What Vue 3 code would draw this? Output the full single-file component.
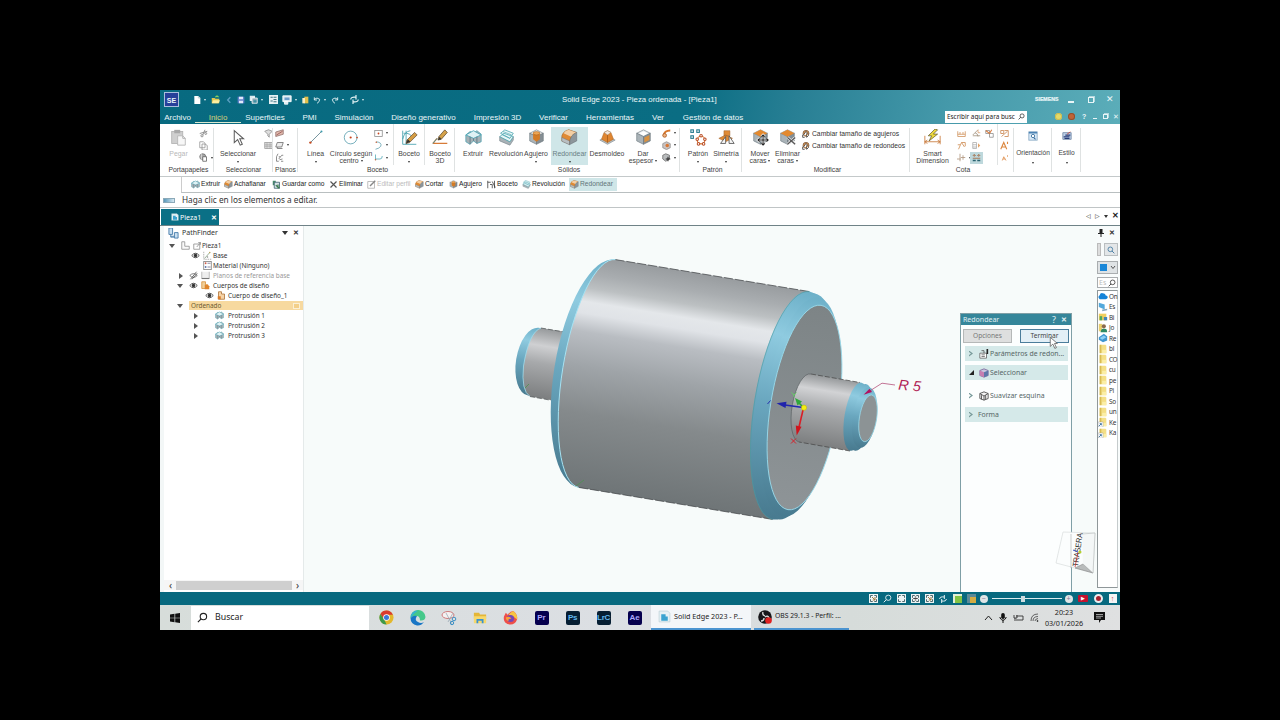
<template>
  <div class="pantalla">
    <!-- Símbolos de iconos -->
    <svg class="defs" width="0" height="0">
      <symbol id="i-cubo" viewBox="0 0 20 20">
        <path d="M10 1 18 5 10 9 2 5Z" fill="#e9edef" stroke="#69757b" stroke-width=".7" />
        <path d="M2 5 10 9V18L2 14Z" fill="#aab3b8" stroke="#69757b" stroke-width=".7" />
        <path d="M18 5 10 9V18L18 14Z" fill="#858e94" stroke="#69757b" stroke-width=".7" />
      </symbol>
      <symbol id="i-extruir" viewBox="0 0 20 20">
        <path d="M1 7 6 3 10 5 14 2 19 6V15L14 17 10 14 6 18 1 15Z" fill="#a5b0b5" stroke="#59a7b5" />
        <path d="M1 7 10 2 19 7 10 11Z" fill="#dff1f4" stroke="#4aa5b5" />
        <path d="M6 9V18M14 9V17M10 11V14" stroke="#5c7a85" />
      </symbol>
      <symbol id="i-revol" viewBox="0 0 20 20">
        <path d="M2 9 14 15 18 9V13L14 19 2 14Z" fill="#a9b2b7" stroke="#758289" stroke-width=".7" />
        <path d="M2 9 7 5 18 9 14 15ZM3 5 8 1 18 5 14 11Z" fill="#e9f7f8" stroke="#47a3ae" stroke-width=".9" />
        <path d="M5 7 14 11M6 3 16 7" stroke="#47a3ae" stroke-width=".7" />
      </symbol>
      <symbol id="i-agujero" viewBox="0 0 20 20">
        <use href="#i-cubo" />
        <path d="M6 5v7l4 3 4-3V5Z" fill="#d47b26" />
        <ellipse cx="10" cy="5" rx="4" ry="2" fill="#eda554" stroke="#a85d18" stroke-width=".6" />
      </symbol>
      <symbol id="i-redondo" viewBox="0 0 20 20">
        <path d="M2 7 9 1 18 4 11 8Z" fill="#f3e6d8" stroke="#8a7462" stroke-width=".7" />
        <path d="M1 8Q3 2 9 1L18 4Q11 6 10 18L1 14Z" fill="#e08a32" stroke="#9c5c20" stroke-width=".6" />
        <path d="M3 5Q5 2 9 1L18 4Q14 5 12 9Z" fill="#f3cfa4" />
        <path d="M1 10 10 14V18.500L1 14.500Z" fill="#b9bfc2" stroke="#6e777c" stroke-width=".6" />
        <path d="M10 18.500Q10 7 18.500 4V14Z" fill="#8d969b" stroke="#646e74" stroke-width=".6" />
      </symbol>
      <symbol id="i-desmoldeo" viewBox="0 0 20 20">
        <path d="M1 13 10 9 19 13 10 18Z" fill="#bcc3c7" stroke="#78838a" stroke-width=".7" />
        <path d="M6 4 10 2 14 4 17 12 10 16 3 12Z" fill="#df8530" stroke="#a66020" stroke-width=".6" />
        <path d="M6 4 10 2 14 4 10 7Z" fill="#f5e8dc" stroke="#8d8174" stroke-width=".5" />
        <path d="M10 7V16" stroke="#aa5d19" />
      </symbol>
      <symbol id="i-espesor" viewBox="0 0 20 20">
        <use href="#i-cubo" />
        <path d="M11 10 17 7V13L11 16Z" fill="#d9913f" />
        <path d="M5 5 10 3 15 5 10 7.500Z" fill="#fff" />
      </symbol>
      <symbol id="i-patron" viewBox="0 0 20 20">
        <g fill="#fff" stroke="#297c91" stroke-width="1.300">
          <rect x="1" y="1" width="3" height="3" /><rect x="8" y="1" width="3" height="3" /><rect x="1" y="8" width="3" height="3" />
        </g>
        <circle cx="13" cy="13" r="4.500" fill="none" stroke="#d87834" stroke-width="1.400" />
        <g fill="#fff" stroke="#b84d26" stroke-width="1.200">
          <circle cx="13" cy="8" r="1.500" /><circle cx="17.500" cy="12" r="1.500" /><circle cx="8.500" cy="12" r="1.500" /><circle cx="16" cy="17.500" r="1.500" /><circle cx="10" cy="17.500" r="1.500" />
        </g>
      </symbol>
      <symbol id="i-simetria" viewBox="0 0 20 20">
        <path d="M7 2h7v6H7ZM1 11 9 7 17 11 9 15Z" fill="#df8b37" stroke="#9d5f27" stroke-width=".6" />
        <path d="M3 17 9 9V17ZM13 8 19 17H13Z" fill="#f7f7f7" stroke="#555" />
      </symbol>
      <symbol id="i-mover" viewBox="0 0 20 20">
        <use href="#i-cubo" /><path d="M10 1 18 5 10 9 2 5Z" fill="#e4892e" />
        <path d="M13 7v12M7 13h12M11 9l2-2 2 2M11 17l2 2 2-2M9 11l-2 2 2 2M17 11l2 2-2 2" fill="none" stroke="#fff" stroke-width="2.800" />
        <path d="M13 7v12M7 13h12M11 9l2-2 2 2M11 17l2 2 2-2M9 11l-2 2 2 2M17 11l2 2-2 2" fill="none" stroke="#222" stroke-width="1.200" />
      </symbol>
      <symbol id="i-elimcara" viewBox="0 0 20 20">
        <use href="#i-cubo" /><path d="M10 1 18 5 10 9 2 5Z" fill="#e4892e" />
        <path d="M10 10 19 18M19 10 10 18" stroke="#f5f5f5" stroke-width="3" /><path d="M10 10 19 18M19 10 10 18" stroke="#555" stroke-width="1.500" />
      </symbol>
      <symbol id="i-pegar" viewBox="0 0 20 20">
        <rect x="2" y="3" width="13" height="14" fill="#cfcfcf" stroke="#b2b2b2" /><rect x="5" y="1" width="7" height="4" fill="#a9a9a9" />
        <path d="M9 8h6l3 3v8H9Z" fill="#f7f7f7" stroke="#b4b4b4" /><path d="M15 8v3h3" fill="none" stroke="#aaa" />
      </symbol>
      <symbol id="i-flecha" viewBox="0 0 20 20"><path d="M5 2V16L9 12.500 12 19 14.500 18 11.500 11.500H16Z" fill="#fff" stroke="#5b5b5b" stroke-width="1.200" /></symbol>
      <symbol id="i-linea" viewBox="0 0 20 20"><path d="M4 16 17 3" stroke="#4b7280" stroke-width=".9" /><circle cx="4" cy="16" r="1.400" fill="#c24a20" /><circle cx="17" cy="3" r="1.200" fill="#3a9aab" /></symbol>
      <symbol id="i-circulo" viewBox="0 0 20 20"><circle cx="9" cy="10" r="7.500" fill="none" stroke="#4f99a9" stroke-width=".9" /><circle cx="9" cy="10" r="1.300" fill="#c8431c" /><circle cx="16.500" cy="10" r="1" fill="#c8431c" /></symbol>
      <symbol id="i-boceto" viewBox="0 0 20 20">
        <path d="M2 2V18H18M3 5Q11 4 14 11M2 12Q4 3 11 2M6 2V18" fill="none" stroke="#45a0ae" />
        <path d="M16 4 19 7 10 16 6 17 7 13Z" fill="#d49c43" stroke="#5a4630" stroke-width=".8" /><path d="M8 12 6 17 11 15Z" fill="#333" />
      </symbol>
      <symbol id="i-boceto3d" viewBox="0 0 20 20">
        <path d="M1 17 6 11M1 17H18" stroke="#d77b38" stroke-width="1.500" /><path d="M1 17 6 11" stroke="#3b9aaa" />
        <path d="M15 1 18 4 11 12 7 13 8 9Z" fill="#d5a24a" stroke="#4c3d29" stroke-width=".8" /><path d="M9 9 7 13 11 12Z" fill="#333" />
      </symbol>
      <symbol id="i-smart" viewBox="0 0 20 20">
        <path d="M1 8V18M19 8V18M1 15H19M1 15l3-2M1 15l3 2M19 15l-3-2M19 15l-3 2" fill="none" stroke="#c97a3b" />
        <path d="M13 0 5 8H9L6 14 16 6H11L16 1Z" fill="#eedb3d" stroke="#574e25" stroke-width=".8" />
      </symbol>
      <symbol id="i-tijera" viewBox="0 0 12 12"><path d="M1 6 11 3M5 8 8 1" stroke="#888" stroke-width="1.200" /><circle cx="4" cy="9" r="1.500" fill="none" stroke="#777" /><circle cx="9" cy="6" r="1.300" fill="none" stroke="#777" /></symbol>
      <symbol id="i-copiar" viewBox="0 0 12 12"><path d="M1 1h5l2 2v6H1ZM4 4h4l3 2v6H4Z" fill="#fff" stroke="#8f8f8f" /></symbol>
      <symbol id="i-pegarb" viewBox="0 0 12 12"><circle cx="5" cy="5" r="4" fill="#aaa" stroke="#666" /><path d="M5 5h5v6H5Z" fill="#fff" stroke="#555" /><path d="M3 1v8" stroke="#eee" /></symbol>
      <symbol id="i-filtro" viewBox="0 0 12 12"><path d="M1 3 6 1l5 2-4 4v4L5 9V7Z" fill="#dedede" stroke="#8a8a8a" /></symbol>
      <symbol id="i-lista" viewBox="0 0 12 12"><rect x="1" y="2" width="10" height="8" fill="#ddd" stroke="#999" /><path d="M1 5h10M1 7h10M4 2v8M8 2v8" stroke="#999" stroke-width=".7" /></symbol>
      <symbol id="i-plano1" viewBox="0 0 12 12"><path d="M1 4 11 1V7L1 10Z" fill="#e1b9ac" stroke="#8f6e69" /><path d="M2 8 10 3" stroke="#8b4949" /></symbol>
      <symbol id="i-plano2" viewBox="0 0 12 12"><path d="M3 2h8L9 8H1ZM3 8v2h7" fill="#ececec" stroke="#666" /></symbol>
      <symbol id="i-plano3" viewBox="0 0 12 12"><path d="M4 1 2 5v6h3M5 8l4-5M6 9l4-1M9 3h2M5 5h2M8 11h3" fill="none" stroke="#777" stroke-width="1.100" /></symbol>
      <symbol id="i-rect" viewBox="0 0 12 12"><rect x="1" y="2" width="10" height="8" fill="none" stroke="#888" /><circle cx="6" cy="6" r="1.200" fill="#c8431c" /></symbol>
      <symbol id="i-arco" viewBox="0 0 12 12"><path d="M3 1Q11 2 9 7 7 10 2 11" fill="none" stroke="#579aaa" /><circle cx="3" cy="1.500" r="1" fill="#c85b31" /></symbol>
      <symbol id="i-curva" viewBox="0 0 12 12"><path d="M2 2V8H8Q11 8 11 4" fill="none" stroke="#4ba4b3" /><circle cx="2" cy="9" r="1" fill="#bb5e3a" /></symbol>
      <symbol id="i-barrido" viewBox="0 0 12 12"><path d="M2 9Q3 2 11 2" fill="none" stroke="#d8772c" stroke-width="2.500" /><circle cx="3.500" cy="8.500" r="2.500" fill="#edb17f" stroke="#a5541c" /></symbol>
      <symbol id="i-bola" viewBox="0 0 12 12"><path d="M6 1 11 3.500V9L6 11.500 1 9V3.500Z" fill="#c9c2c0" stroke="#777" stroke-width=".8" /><circle cx="7" cy="6" r="2.300" fill="#d97734" /></symbol>
      <symbol id="i-hexa" viewBox="0 0 12 12"><path d="M5 1 10 3V8L5 11 1 8V3Z" fill="#b9bcbd" stroke="#666" /><path d="M8 5v6M5 8h6" stroke="#222" stroke-width="1.300" /></symbol>
      <symbol id="i-tam" viewBox="0 0 12 12"><circle cx="6" cy="5" r="4.500" fill="#e29a52" stroke="#674c38" /><path d="M2 8 6 2 10 7M1 7v4h3M7 5v6l3-3" fill="#fff" stroke="#3c3632" stroke-width="1.200" /></symbol>
      <symbol id="i-cota1" viewBox="0 0 12 12"><path d="M1 3v7h10V3M1 7h10M4 4v3M8 4v3" fill="none" stroke="#d29662" stroke-width="1.100" /></symbol>
      <symbol id="i-cota2" viewBox="0 0 12 12"><path d="M2 11 6 2 10 8M1 5h3M6 2h5v5" fill="none" stroke="#d29662" stroke-width="1.200" /></symbol>
      <symbol id="i-cota3" viewBox="0 0 12 12"><path d="M4 1v10M0 8h5M5 6h6M8 3v6" fill="none" stroke="#b79e88" stroke-width="1.200" /></symbol>
      <symbol id="i-cota4" viewBox="0 0 12 12"><path d="M1 8 8 1M1 9h10M4 5q4 1 4 5" fill="none" stroke="#9b8b76" /><path d="M8 1v4h3" fill="none" stroke="#d79a6a" /></symbol>
      <symbol id="i-cota5" viewBox="0 0 12 12"><path d="M1 2h5v8H1ZM1 5h5M1 8h5" fill="none" stroke="#aaa" /><path d="M8 3v6l3-3Z" fill="#e3a368" /></symbol>
      <symbol id="i-cota6" viewBox="0 0 12 12"><path d="M1 7h10M3 5V2M3 2l-2 2M3 2l2 2M9 5V2M9 2 7 4M9 2l2 2" fill="none" stroke="#a5714c" stroke-width="1.200" /><path d="M1 10h4M7 10h4" stroke="#2b6472" stroke-width="2" /></symbol>
      <symbol id="i-cota7" viewBox="0 0 12 12"><path d="M1 2h5v4H1ZM6 6h5v5H6Z" fill="none" stroke="#888" /><path d="M1 2 6 6 9 1" fill="none" stroke="#d67c42" stroke-width="1.400" /></symbol>
      <symbol id="i-cota8" viewBox="0 0 12 12"><path d="M1 2h4v4H1ZM6 2h5v8H6M2 10 10 3" fill="none" stroke="#cf915f" stroke-width="1.200" /></symbol>
      <symbol id="i-cotaA" viewBox="0 0 12 12"><path d="M1 11 5 2 9 11M3 8h5M10 1v3" fill="none" stroke="#dc873f" stroke-width="1.500" /></symbol>
      <symbol id="i-cotaB" viewBox="0 0 12 12"><path d="M3 10 5 5 8 10M4 8h3M10 3v2" fill="none" stroke="#dc873f" /></symbol>
      <symbol id="i-orient" viewBox="0 0 12 12"><rect x="1" y="1" width="10" height="10" fill="#d7e9f7" stroke="#8dabc5" /><rect x="1" y="1" width="10" height="2" fill="#4c83b4" /><circle cx="6" cy="6" r="2" fill="#fff" stroke="#376d9b" /><path d="M7 8 9 10" stroke="#376d9b" stroke-width="1.300" /></symbol>
      <symbol id="i-estilo" viewBox="0 0 12 12"><path d="M1 2h10v8H1Z" fill="#bed2e8" stroke="#7187a5" /><path d="M2 7h7M4 5h6M3 9h6" stroke="#273b77" stroke-width="1.400" /><path d="M6 4 10 1" stroke="#c74334" /></symbol>
      <symbol id="i-guardar" viewBox="0 0 12 12"><path d="M1 1h4v6H1Z" fill="#4a8a6c" /><path d="M3 3h7v8H3Z" fill="#d6e2e6" stroke="#315765" /><path d="M5 7 10 11M8 6v5" stroke="#397a4c" stroke-width="1.500" /></symbol>
      <symbol id="i-x" viewBox="0 0 12 12"><path d="M2 2 10 10M10 2 2 10" stroke="#555" stroke-width="1.600" /></symbol>
      <symbol id="i-editar" viewBox="0 0 12 12"><path d="M1 2h9v9H1Z" fill="none" stroke="#aaa" /><path d="M4 8 11 1" stroke="#888" stroke-width="1.800" /></symbol>
      <symbol id="i-perfil" viewBox="0 0 12 12"><path d="M1 1v10M1 3h4M4 6h3v5M7 2l4 8M10 1v10" fill="none" stroke="#333" /></symbol>
      <symbol id="i-hoja" viewBox="0 0 12 12"><path d="M2 0h6l3 3v9H2Z" fill="#fff" /><path d="M8 0v3h3" fill="none" stroke="#a3b9c0" /></symbol>
      <symbol id="i-abrir" viewBox="0 0 12 12"><path d="M1 4h4l1 1h5v6H1Z" fill="#e3c651" /><path d="M1 11 3 7h9l-2 4Z" fill="#fff0a0" /><path d="M6 3q2-3 4 0" fill="none" stroke="#8fd65c" stroke-width="1.500" /></symbol>
      <symbol id="i-clip" viewBox="0 0 12 12"><path d="M8 2 4 6l4 4" fill="none" stroke="#5a9ec0" stroke-width="2" /></symbol>
      <symbol id="i-disco" viewBox="0 0 12 12"><path d="M1 1h10v10H1Z" fill="#5f80c8" /><path d="M3 1h6v4H3ZM3 7h6v4H3Z" fill="#dfe9fa" /></symbol>
      <symbol id="i-discos" viewBox="0 0 12 12"><path d="M1 1h7v7H1Z" fill="#dcebf0" /><path d="M4 4h7v7H4Z" fill="#8aa7b5" stroke="#fff" /><path d="M6 7h4v3H6Z" fill="#3c91a5" /></symbol>
      <symbol id="i-check" viewBox="0 0 12 12"><rect width="12" height="12" fill="#e6f1f4" /><path d="M2 3h3M2 8h3M6 3h4M6 6h4M6 9h4" stroke="#2a6576" stroke-width="1.200" /></symbol>
      <symbol id="i-monit" viewBox="0 0 12 12"><path d="M1 1h10v7H1ZM3 8h4v3H3Z" fill="#d8e9f2" stroke="#fff" /><path d="M3 3h6v3H3Z" fill="#6b9dcb" /></symbol>
      <symbol id="i-puerta" viewBox="0 0 12 12"><path d="M5 1h6v10H5Z" fill="#e2c04c" /><path d="M2 3h4v8H2Z" fill="#f8eec4" /></symbol>
      <symbol id="i-undo" viewBox="0 0 12 12"><path d="M2 2v4h4M2 5q4-4 8 0 0 4-4 6" fill="none" stroke="currentColor" stroke-width="1.300" /></symbol>
      <symbol id="i-redo" viewBox="0 0 12 12"><path d="M10 2v4H6M10 5Q6 1 2 5q0 4 4 6" fill="none" stroke="currentColor" stroke-width="1.300" /></symbol>
      <symbol id="i-sinc" viewBox="0 0 12 12"><path d="M1 6q0-4 7-3M8 0v6M11 6q0 4-7 3M4 6v6" fill="none" stroke="currentColor" stroke-width="1.500" /></symbol>
      <symbol id="i-lupa" viewBox="0 0 12 12"><circle cx="7" cy="5" r="3.500" fill="none" stroke="currentColor" stroke-width="1.200" /><path d="M4.500 7.500 1 11" stroke="currentColor" stroke-width="1.300" /></symbol>
      <symbol id="i-ojo" viewBox="0 0 12 12"><path d="M1 6q5-6 10 0-5 6-10 0Z" fill="#fff" stroke="#444" stroke-width="1.200" /><circle cx="6" cy="6" r="2.300" fill="#333" /></symbol>
      <symbol id="i-ojono" viewBox="0 0 12 12"><path d="M1 6q5-5 10 0-5 5-10 0Z" fill="none" stroke="#555" /><path d="M2 11 10 1M4 11 11 3" stroke="#444" /></symbol>
      <symbol id="i-ele" viewBox="0 0 12 12"><path d="M1 1h4v6h6v4H1Z" fill="#fafafa" stroke="#888" /></symbol>
      <symbol id="i-pieza" viewBox="0 0 12 12"><path d="M1 4h8v7H1ZM5 8l5-6M7 2h3v3" fill="none" stroke="#888" /></symbol>
      <symbol id="i-base" viewBox="0 0 12 12"><path d="M1 1v10h10" fill="none" stroke="#999" stroke-dasharray="2 1" /><path d="M2 10 9 2" stroke="#7c9a79" /><circle cx="9" cy="2" r="1" fill="#b7a452" /><circle cx="6" cy="8" r="1" fill="#888" /></symbol>
      <symbol id="i-mat" viewBox="0 0 12 12"><rect x="1" y=".5" width="10" height="11" fill="#fff" stroke="#777" /><path d="M6 3h4M6 8h4" stroke="#668" /><circle cx="3.500" cy="3" r="1.200" fill="#d25c48" /><circle cx="3.500" cy="8" r="1.200" fill="#5973aa" /></symbol>
      <symbol id="i-planos" viewBox="0 0 12 12"><path d="M1 1v9h10V1" fill="#eee" stroke="#aaa" /><path d="M1 10h10" stroke="#777" stroke-width="1.500" /></symbol>
      <symbol id="i-cuerpo" viewBox="0 0 12 12"><path d="M1 1h5v4h3v5H1Z" fill="#f1cf99" stroke="#d58b33" /><path d="M5 5h4l2 2v4H5Z" fill="#df842c" /></symbol>
      <symbol id="i-cuerpo1" viewBox="0 0 12 12"><path d="M2 1h4v3h4v7H2Z" fill="#f5d4a9" stroke="#a86b30" /><path d="M1 7h4v4H1Z" fill="#db7c28" /></symbol>
      <symbol id="i-path" viewBox="0 0 12 12"><path d="M1 0h4v7H1ZM7 5h4v6H7Z" fill="#c9dff0" stroke="#487eac" /><path d="M3 7v3h4M3 9h4" fill="none" stroke="#487eac" /></symbol>
      <symbol id="i-param" viewBox="0 0 12 12"><path d="M1 5h8v6H1ZM3 7h4M3 9h4" fill="#fff" stroke="#666" /><path d="M3 2h3v3" fill="none" stroke="#555" /><path d="M10 0v6" stroke="#222" stroke-width="2" /></symbol>
      <symbol id="i-selcubo" viewBox="0 0 12 12"><path d="M1 3 6 1l5 2v6l-5 2-5-2Z" fill="#c9c6e0" stroke="#7b6a9a" /><path d="M1 3 6 5v6L1 9Z" fill="#c77fb1" /><path d="M6 5 11 3v6l-5 2Z" fill="#5d78aa" /></symbol>
      <symbol id="i-suave" viewBox="0 0 12 12"><path d="M1 3 6 1l5 2v6l-5 2-5-2Z" fill="#f3f3f3" stroke="#444" /><path d="M1 3 6 6l5-3M6 6v5M3 5v5M8 5v5" fill="none" stroke="#444" /></symbol>
      <symbol id="i-carpeta" viewBox="0 0 12 12"><path d="M2 1h7l1 1v9H2Z" fill="#f4df86" /><path d="M2 1h2v10H2Z" fill="#d9bc54" /><path d="M5 7h5v4H5Z" fill="#fbeea7" /></symbol>
      <symbol id="i-atajo" viewBox="0 0 12 12"><use href="#i-carpeta" /><rect y="6" width="6" height="6" fill="#fff" stroke="#999" stroke-width=".5" /><path d="M1 11 4 8M2 8h2v2" fill="none" stroke="#2d6896" /></symbol>
      <symbol id="i-nube" viewBox="0 0 12 12"><path d="M2 10Q-1 7 2 5 3 1 7 3 9 3 9 5 13 6 11 9 10 10 9 10Z" fill="#1583d8" /></symbol>
      <symbol id="i-equipo" viewBox="0 0 12 12"><path d="M1 1 8 3v6L1 6Z" fill="#53a9dc" /><path d="M5 9 11 8v2l-6 1Z" fill="#8aa9bd" /></symbol>
      <symbol id="i-bibl" viewBox="0 0 12 12"><path d="M1 2h9v8H1Z" fill="#f0cf5e" /><path d="M2 5h3v5H2Z" fill="#4fa85f" /><path d="M7 6h4v4H7Z" fill="#4385b8" /></symbol>
      <symbol id="i-user" viewBox="0 0 12 12"><path d="M1 1h4v9H1Z" fill="#e9cf6e" /><circle cx="7" cy="4" r="2.500" fill="#8a6b4c" /><path d="M3 11q1-5 4-4 4-1 4 4Z" fill="#2f8a64" /></symbol>
      <symbol id="i-red" viewBox="0 0 12 12"><path d="M1 5 7 1l4 3v5l-5 2-5-3Z" fill="#3f96d0" /><path d="M2 6 7 3l3 2-5 3Z" fill="#8cd0f5" /></symbol>
      <symbol id="i-marco" viewBox="0 0 12 12"><rect width="12" height="12" fill="#eef4f4" /><path d="M2 5V2h3M7 2h3v3M10 7v3H7M5 10H2V7" fill="none" stroke="#3d5960" stroke-width="1.200" /></symbol>
      <symbol id="i-marco1" viewBox="0 0 12 12"><use href="#i-marco" /><path d="M4 4 8 8M8 4v4H5" fill="none" stroke="#a07a3c" stroke-width="1.300" /></symbol>
      <symbol id="i-marco2" viewBox="0 0 12 12"><use href="#i-marco" /><path d="M3 6h6M5 4h2M5 8h2" fill="none" stroke="#333" stroke-width="1.200" /></symbol>
      <symbol id="i-solido" viewBox="0 0 12 12"><path d="M1 1h8l2 2v8H1Z" fill="#e5f1f5" stroke="#b9ced6" stroke-width=".6" /><path d="M3 4h4v2h2v4H3Z" fill="#3aa3d0" /></symbol>
    </svg>

    <div class="ventana">
      <!-- Cabecera -->
      <header class="cabecera">
        <div class="titulo">
          <div class="logo">SE</div>
          <div class="rapido">
            <div v-for="q in rapido" :key="q.n" :style="{ width: q.w + 'px' }">
              <Ico :n="q.n" :s="q.s || 8" /><i v-if="q.fl" class="tri"></i>
            </div>
          </div>
          <span class="titulo-texto">Solid Edge 2023 - Pieza ordenada - [Pieza1]</span>
          <div class="titulo-der"><b>SIEMENS</b><i class="min"></i><i class="rest"></i><span class="equis">✕</span></div>
        </div>
        <nav class="menu">
          <span v-for="m in menu" :key="m.t" :class="{ activo: m.a }" :style="{ width: m.w + 'px' }">{{ m.t }}</span>
          <div class="buscar-cmd"><span>Escribir aquí para busc</span><Ico n="lupa" :s="7" /></div>
          <div class="menu-der"><i class="cara"></i><i class="cara roja"></i><b>?</b><i class="min chico"></i><i class="rest chico"></i><span>✕</span></div>
        </nav>
      </header>

      <!-- Cinta -->
      <section class="cinta">
        <div v-for="g in grupos" :key="g.t + g.w" class="grupo" :style="{ width: g.w + 'px' }">
          <div class="grupo-cuerpo">
            <template v-for="(b, i) in g.b" :key="i">
              <div v-if="b.col" class="columna" :class="{ sep: b.sep }" :style="{ width: b.w + 'px' }">
                <div v-for="(c, k) in b.col" :key="k" :class="{ marcada: c === 'cota6' }">
                  <Ico v-if="c" :n="c" :s="9" /><i v-if="b.fl && b.fl.includes(k)" class="tri"></i>
                </div>
              </div>
              <div v-else-if="b.filas" class="filas">
                <div v-for="f in b.filas" :key="f"><Ico n="tam" :s="8" />{{ f }}</div>
              </div>
              <div v-else class="boton" :class="{ marcado: b.on, sep: b.sep, apagado: b.off, bajo: b.s }" :style="{ width: b.w + 'px' }">
                <div class="boton-ico"><Ico :n="b.n" :s="b.s || 17" /></div>
                <span>{{ b.t }}</span>
                <span v-if="b.t2">{{ b.t2 }}<i v-if="b.fl" class="tri"></i></span>
                <i v-else-if="b.fl" class="tri"></i>
              </div>
            </template>
          </div>
          <div class="grupo-nombre" :style="{ paddingLeft: (g.p || 0) + 'px' }">{{ g.t }}</div>
        </div>
      </section>

      <div class="comandos">
        <div v-for="c in comandos" :key="c.t" :class="{ on: c.on, off: c.off }" :style="{ width: c.w + 'px' }">
          <Ico :n="c.n" :s="9" /><span>{{ c.t }}</span>
        </div>
      </div>
      <div class="aviso"><i></i><span>Haga clic en los elementos a editar.</span></div>
      <div class="pestanas">
        <div class="pestana"><Ico n="solido" :s="8" /><span>Pieza1</span><b>✕</b></div>
        <div class="pestanas-der"><span>◁</span><span>▷</span><i class="tri medio"></i><b>✕</b></div>
      </div>

      <main class="cuerpo">
        <!-- Árbol -->
        <aside class="arbol">
          <div class="arbol-tit"><Ico n="path" :s="11" /><span>PathFinder</span><i class="tri grande"></i><b>✕</b></div>
          <div v-for="f in arbol" :key="f.t" class="fila" :class="{ ord: f.ord, gris: f.gris }">
            <div class="fila-pre" :style="{ width: f.x + 'px', paddingLeft: f.p + 'px' }">
              <i v-if="f.e" class="exp" :class="f.e"></i>
              <span class="hueco"></span>
              <Ico v-for="n in f.n" :key="n" :n="n" :s="9" />
            </div>
            <span class="fila-texto"><span>{{ f.t }}</span><i v-if="f.ord" class="marca"></i></span>
          </div>
          <div class="scroll-h"><span>‹</span><i></i><span>›</span></div>
        </aside>

        <!-- Vista 3D -->
        <section class="vista">
          <svg class="modelo" viewBox="304 226 793 366">
            <defs>
              <linearGradient id="g-cuerpo" gradientUnits="userSpaceOnUse" x1="812" y1="291.500" x2="775" y2="519.500">
                <stop offset="0" stop-color="#989c9f" /><stop offset=".08" stop-color="#a9adb0" />
                <stop offset=".14" stop-color="#bcc0c2" /><stop offset=".2" stop-color="#e4e7ea" />
                <stop offset=".25" stop-color="#e0e3e7" /><stop offset=".33" stop-color="#b9bdc2" />
                <stop offset=".48" stop-color="#9fa4a8" /><stop offset=".68" stop-color="#858a8c" />
                <stop offset="1" stop-color="#6f7577" />
              </linearGradient>
              <linearGradient id="g-eje" gradientUnits="userSpaceOnUse" x1="860" y1="382" x2="849" y2="451">
                <stop offset="0" stop-color="#96999b" /><stop offset=".2" stop-color="#d2d3d5" />
                <stop offset=".45" stop-color="#aaacae" /><stop offset="1" stop-color="#7c7e7f" />
              </linearGradient>
              <linearGradient id="g-eje2" gradientUnits="userSpaceOnUse" x1="542" y1="328" x2="531" y2="397">
                <stop offset="0" stop-color="#96999b" /><stop offset=".25" stop-color="#cfd0d2" />
                <stop offset=".5" stop-color="#a7a9ab" /><stop offset="1" stop-color="#7c7e7f" />
              </linearGradient>
              <linearGradient id="g-azul" x1="0" y1="0" x2="0" y2="1">
                <stop offset="0" stop-color="#6db0c8" /><stop offset=".2" stop-color="#8fcbe0" />
                <stop offset=".5" stop-color="#6aa7bf" /><stop offset="1" stop-color="#487a8f" />
              </linearGradient>
              <linearGradient id="g-cara" x1="0" y1="0" x2="0" y2="1">
                <stop offset="0" stop-color="#7d8486" /><stop offset="1" stop-color="#8e9497" />
              </linearGradient>
            </defs>
            <ellipse cx="533.500" cy="361.700" rx="17.500" ry="34.300" transform="rotate(9.200 533.500 361.700)" fill="url(#g-azul)" />
            <path d="M541 328 580 334V405L530 396.500Q521 391 523.500 366 529 332 541 328Z" fill="url(#g-eje2)" />
            <path d="M541 328Q529 332 523.500 366 521 391 530 396.500" fill="none" stroke="#9edcec" stroke-width=".8" />
            <path d="M541 328 570 333M530 396.500 555 401" stroke="#4c5052" stroke-width=".7" stroke-dasharray="5 2" />
            <ellipse cx="597" cy="373.500" rx="43" ry="115.400" transform="rotate(9.200 597 373.500)" fill="url(#g-azul)" />
            <path d="M615.500 259.600 809.500 291.600 772.500 519.400 578.500 487.400A35 115.400 9.200 0 1 615.500 259.600Z" fill="url(#g-cuerpo)" />
            <path d="M578.500 487.400A35 115.400 9.200 0 1 615.500 259.600" fill="none" stroke="#a6e2f2" />
            <path d="M615.500 259.600 809.500 291.600M772.500 519.400 578.500 487.400" stroke="#3d4143" stroke-width=".7" stroke-dasharray="9 2" />
            <g fill="url(#g-azul)">
              <ellipse cx="791" cy="405.500" rx="37" ry="115.400" transform="rotate(9.200 791 405.500)" />
              <ellipse cx="796" cy="406.300" rx="37" ry="114.500" transform="rotate(9.200 796 406.300)" />
              <ellipse cx="800.500" cy="407" rx="36.500" ry="111" transform="rotate(9.200 800.500 407)" />
            </g>
            <path d="M772.500 519.400A37 115.400 9.200 0 1 809.500 291.600" fill="none" stroke="#4e9aa0" stroke-width=".6" />
            <ellipse cx="804.500" cy="407.500" rx="34" ry="103.500" transform="rotate(9.200 804.500 407.500)" fill="url(#g-cara)" stroke="#98d7e8" stroke-width=".9" />
            <path d="M811 374 860 382.500 850 451 799 442A13 34.500 9.200 0 1 811 374Z" fill="url(#g-eje)" />
            <path d="M799 442A13 34.500 9.200 0 1 811 374" fill="none" stroke="#5c6264" stroke-width=".7" />
            <path d="M811 374 860 382.500M850 451 799 442" stroke="#444" stroke-width=".7" stroke-dasharray="5 2" />
            <g fill="url(#g-azul)">
              <ellipse cx="856" cy="416.700" rx="11.500" ry="34.500" transform="rotate(9.200 856 416.700)" />
              <ellipse cx="860.500" cy="417.300" rx="12" ry="33.800" transform="rotate(9.200 860.500 417.300)" />
              <ellipse cx="864.500" cy="417.700" rx="12" ry="30.500" transform="rotate(9.200 864.500 417.700)" />
            </g>
            <ellipse cx="868" cy="418.300" rx="8.600" ry="23.600" transform="rotate(9.200 868 418.300)" fill="#8c9395" stroke="#98d7e8" stroke-width=".8" />
            <path d="M576 486 584 480M525 388l4-4" stroke="#4c9350" stroke-width=".8" />

            <!-- Ejes -->
            <g stroke-width="1.600">
              <path d="M803 407.500 785 405" stroke="#2226b0" /><path d="M776.500 403.300 786.500 401.800 785.500 408Z" fill="#2023ac" />
              <path d="M803.500 408 799 427" stroke="#d81f27" /><path d="M796.700 435.500 795.800 425.500 801.500 426.800Z" fill="#d0141d" />
              <path d="M803 407 798 402" stroke="#29a537" /><path d="M795 398 802 401.500 797.500 405.500Z" fill="#2fa83b" />
              <path d="M791.500 392.500 794 395 796.500 392.500M794 395v2" stroke="#63d163" stroke-width=".9" fill="none" />
              <path d="M791 438.500 796 443.500M796 438.500 791 443.500" stroke="#d5212b" stroke-width="1" />
              <path d="M767.500 404 770.500 400.500" stroke="#2733b0" stroke-width="1" />
            </g>
            <circle cx="804" cy="407.700" r="2.600" fill="#f5ee14" stroke="#bcb000" stroke-width=".5" />
            <path d="M865 394 882 383.200 895 385" fill="none" stroke="#b5527b" stroke-width=".8" />
            <path d="M863.500 394.800 869.500 388.800 872 392Z" fill="#b01362" />
            <text x="898" y="389.500" class="radio" transform="rotate(5 899 389)">R 5</text>
          </svg>

          <div class="dialogo">
            <div class="dialogo-tit"><span>Redondear</span><b class="ayuda">?</b><b>✕</b></div>
            <div class="dialogo-bot"><span>Opciones</span><span class="foco">Terminar</span></div>
            <div v-for="s in secciones" :key="s.t" class="seccion" :class="s.c">
              <i class="exp" :class="s.e"></i><Ico v-if="s.n" :n="s.n" :s="10" /><span>{{ s.t }}</span>
            </div>
          </div>
          <svg class="cubo-vista" viewBox="0 0 46 50">
            <path d="M9 6 41 7 39 47 21 42 2 37Z" fill="#fbfdfd" stroke="#d8dcdc" stroke-width=".7" />
            <path d="M21 42 29 38 39 47Z" fill="#b8bbbb" stroke="#777" stroke-width=".5" />
            <path d="M28 8 41 7 39 47 29 38" fill="#f4f7f7" stroke="#a9adad" stroke-width=".5" />
            <path d="M17 8V42" stroke="#9a9f9f" stroke-width=".5" />
            <text transform="translate(24 41) rotate(-82)" class="trasera" textLength="34" lengthAdjust="spacingAndGlyphs">TRASERA</text>
            <path d="M24 26 21 41" stroke="#c33" stroke-width=".8" /><circle cx="26" cy="26" r="1.500" fill="#b9cf2e" /><path d="M19 24l5 2" stroke="#3b53c2" />
          </svg>
          <svg class="cursor" viewBox="0 0 20 20"><use href="#i-flecha" /></svg>
        </section>

        <!-- Panel derecho -->
        <aside class="panel">
          <div class="panel-tit"><svg width="6" height="8" viewBox="0 0 6 8"><path d="M1.500 0h3v4H6v1H0V4h1.500ZM2.500 5h1v3h-1Z" fill="#222" /></svg><b>✕</b></div>
          <div class="panel-lupa"><i></i><span><Ico n="lupa" :s="8" /></span></div>
          <div class="panel-sel"><i></i><svg width="6" height="5" viewBox="0 0 6 5"><path d="M1 1 3 3.500 5 1" fill="none" stroke="#555" /></svg></div>
          <div class="panel-busca"><span>Es</span><Ico n="lupa" :s="8" /></div>
          <div class="panel-lista">
            <div v-for="(l, i) in lista" :key="i"><Ico :n="l[0]" :s="10" /><span>{{ l[1] }}</span></div>
          </div>
        </aside>
      </main>

      <div class="estado">
        <Ico n="marco1" :s="9" /><span class="e-lupa"><Ico n="lupa" :s="9" /></span><Ico n="marco" :s="9" /><Ico n="marco2" :s="9" /><Ico n="marco1" :s="9" />
        <span class="e-lupa"><Ico n="sinc" :s="8" /></span><i class="verde"></i><i class="doble"></i>
        <i class="bolita">−</i><div class="zoom"><i></i></div><i class="bolita">+</i>
        <i class="yt">▶</i><i class="rec"></i><i class="sube">↑</i>
      </div>

      <!-- Barra de tareas -->
      <footer class="tareas">
        <svg class="inicio" viewBox="0 0 10 10"><path d="M0 1.400 4.500.8V4.700H0ZM5.200.7 10 0V4.700H5.200ZM0 5.300H4.500V9.200L0 8.600ZM5.200 5.300H10V10L5.200 9.300Z" fill="#111" /></svg>
        <div class="buscar"><Ico n="lupa" :s="11" />Buscar</div>
        <div class="apps">
          <div><svg width="15" height="15" viewBox="0 0 16 16"><circle cx="8" cy="8" r="7.500" fill="#e3b82c" /><path d="M1.500 4.200A7.500 7.500 0 0 1 14.800 5H8L4.500 9Z" fill="#d93b2f" /><path d="M1.500 4.200 6 11 8 15.500A7.500 7.500 0 0 1 1.500 4.200Z" fill="#3d9a4a" /><circle cx="8" cy="8" r="3.500" fill="#fff" /><circle cx="8" cy="8" r="2.700" fill="#3d78d8" /></svg></div>
          <div><svg width="16" height="16" viewBox="0 0 16 16"><path d="M.5 8A7.500 7.500 0 0 1 15.500 7Q15 11 10 10.500 10 5.500 6 6 2 6 .5 8Z" fill="#45c88a" /><path d="M.5 8Q1 .8 8 .5 3 4 .5 8Z" fill="#35b1d5" /><path d="M.5 8Q3 5 7 6 4 10 8 12 11 14 14 12 11 16 7 15.500 .5 14 .5 8Z" fill="#1976c5" /></svg></div>
          <div><svg width="16" height="16" viewBox="0 0 16 16"><ellipse cx="7" cy="5" rx="6" ry="3.500" fill="#f5f1f1" stroke="#cf7b7c" /><path d="M5 3 11 14M12 3 7 12" stroke="#9aa9b5" stroke-width=".8" /><circle cx="11" cy="13" r="1.700" fill="none" stroke="#3d90c5" /><circle cx="13" cy="9" r="1.800" fill="none" stroke="#3d90c5" /></svg></div>
          <div><svg width="14" height="14" viewBox="0 0 16 16"><path d="M1 2h6l1 2h7v5H1Z" fill="#e4b637" /><path d="M1 6h14v8H1Z" fill="#f7d86c" /><path d="M4 9h8v5h-2v-3H6v3H4Z" fill="#3a92d0" /></svg></div>
          <div><svg width="15" height="15" viewBox="0 0 16 16"><path d="M8 15.500C3 15.500 0 12 1 7L3 3 5 5Q8 1 11 1 16 5 15 10 13 15.500 8 15.500Z" fill="#ee4f4a" /><path d="M11 1Q16 5 15 10L11 7 6 5Q8 2 11 1Z" fill="#f8c541" /><circle cx="8" cy="9" r="3.800" fill="#7548b5" /><path d="M3 8Q7 6 9 9 5 9 6 12 3 11 3 8Z" fill="#f7a23a" /></svg></div>
          <div><b class="adobe">Pr</b></div><div><b class="adobe foto">Ps</b></div><div><b class="adobe foto">LrC</b></div><div><b class="adobe">Ae</b></div>
        </div>
        <div class="tarea activa"><Ico n="solido" :s="13" /><span>Solid Edge 2023 - P...</span></div>
        <div class="tarea"><svg width="14" height="14" viewBox="0 0 14 14"><circle cx="7" cy="7" r="6.800" fill="#17171a" /><path d="M7 6Q4 5 5 2M7 7q3-2 4 1M6 8q0 3-3 3" fill="none" stroke="#ddd" stroke-width="1.300" /><circle cx="10.500" cy="10.500" r="3.300" fill="#e02121" /></svg><span>OBS 29.1.3 - Perfil: ...</span></div>
        <div class="bandeja">
          <svg width="9" height="6" viewBox="0 0 9 6"><path d="M1 5 4.500 1 8 5" fill="none" stroke="#222" /></svg>
          <svg width="8" height="10" viewBox="0 0 8 10"><rect x="2.200" width="3.600" height="6" rx="1.800" fill="#111" /><path d="M1 4v1q3 4.500 6 0V4M4 7v3" fill="none" stroke="#111" /></svg>
          <svg width="11" height="8" viewBox="0 0 11 8"><path d="M3 2h7v4H3M1 1v3h3V1M2 4v3" fill="none" stroke="#333" stroke-width=".9" /></svg>
          <svg width="9" height="9" viewBox="0 0 9 9"><path d="M1 8Q1 1 8 1M3 8Q3 3.500 8 3.500M5 8q0-2 3-2.500" fill="none" stroke="#555" stroke-width=".9" /><circle cx="7.500" cy="8" r=".8" /></svg>
        </div>
        <div class="reloj"><span>20:23</span><span>03/01/2026</span></div>
        <svg class="notif" viewBox="0 0 11 11"><path d="M0 0H11V8H7L5 11V8H0Z" fill="#111" /><path d="M2 2.500h7M2 4.300h7M2 6h5" stroke="#ddd" stroke-width=".7" /></svg>
      </footer>
    </div>
  </div>
</template>

<script setup>
import { h } from "vue";

const Ico = (p) =>
  h("svg", { width: p.s, height: p.s, class: "ico" }, [h("use", { href: "#i-" + p.n })]);
Ico.props = ["n", "s"];

const rapido = [
  { n: "hoja", w: 18, fl: true },
  { n: "abrir", w: 14, s: 9 },
  { n: "clip", w: 12 },
  { n: "disco", w: 12 },
  { n: "discos", w: 20, s: 9, fl: true },
  { n: "check", w: 13, s: 9 },
  { n: "monit", w: 19, s: 10, fl: true },
  { n: "puerta", w: 12 },
  { n: "undo", w: 18, fl: true },
  { n: "redo", w: 19, fl: true },
  { n: "sinc", w: 20, s: 9, fl: true },
];

const menu = [
  { t: "Archivo", w: 35 },
  { t: "Inicio", w: 46, a: true },
  { t: "Superficies", w: 48 },
  { t: "PMI", w: 41 },
  { t: "Simulación", w: 48 },
  { t: "Diseño generativo", w: 91 },
  { t: "Impresión 3D", w: 57 },
  { t: "Verificar", w: 55 },
  { t: "Herramientas", w: 58 },
  { t: "Ver", w: 38 },
  { t: "Gestión de datos", w: 72 },
];

const grupos = [
  { t: "Portapapeles", w: 54, p: 3, b: [
    { t: "Pegar", n: "pegar", w: 37, off: true },
    { col: ["tijera", "copiar", "pegarb"], fl: [2], w: 17 },
  ] },
  { t: "Seleccionar", w: 59, b: [
    { t: "Seleccionar", n: "flecha", w: 48, fl: 1 },
    { col: ["filtro", "lista", ""], w: 11 },
  ] },
  { t: "Planos", w: 25, b: [{ col: ["plano1", "plano2", "plano3"], fl: [1], w: 25 }] },
  { t: "Boceto", w: 157, p: 2, b: [
    { t: "Línea", n: "linea", w: 35, fl: 1 },
    { t: "Círculo según", t2: "centro ", n: "circulo", w: 36, fl: 1 },
    { col: ["rect", "arco", "curva"], fl: [0, 1, 2], w: 24 },
    { t: "Boceto", n: "boceto", w: 31, fl: 1, sep: true },
    { t: "Boceto", t2: "3D", n: "boceto3d", w: 31, sep: true },
  ] },
  { t: "Sólidos", w: 225, p: 3, b: [
    { t: "Extruir", n: "extruir", w: 36 },
    { t: "Revolución", n: "revol", w: 30 },
    { t: "Agujero", n: "agujero", w: 30, fl: 1 },
    { t: "Redondear", n: "redondo", w: 37, fl: 1, on: true },
    { t: "Desmoldeo", n: "desmoldeo", w: 38 },
    { t: "Dar", t2: "espesor ", n: "espesor", w: 34, fl: 1 },
    { col: ["barrido", "bola", "hexa"], fl: [0, 1, 2], w: 20 },
  ] },
  { t: "Patrón", w: 62, p: 3, b: [
    { t: "Patrón", n: "patron", w: 36, fl: 1 },
    { t: "Simetría", n: "simetria", w: 20, fl: 1 },
  ] },
  { t: "Modificar", w: 168, p: 3, b: [
    { t: "Mover", t2: "caras ", n: "mover", w: 36, fl: 1 },
    { t: "Eliminar", t2: "caras ", n: "elimcara", w: 19, fl: 1 },
    { filas: ["Cambiar tamaño de agujeros", "Cambiar tamaño de redondeos"] },
  ] },
  { t: "Cota", w: 104, p: 2, b: [
    { t: "Smart", t2: "Dimension", n: "smart", w: 45 },
    { col: ["cota1", "cota2", "cota3"], fl: [2], w: 15 },
    { col: ["cota4", "cota5", "cota6"], w: 13 },
    { col: ["cota7", "", ""], w: 14 },
    { col: ["cota8", "cotaA", "cotaB"], w: 15, sep: true },
  ] },
  { t: "", w: 38, b: [{ t: "Orientación", n: "orient", w: 41, s: 10, fl: 1 }] },
  { t: "", w: 29, b: [{ t: "Estilo", n: "estilo", w: 31, s: 10, fl: 1 }] },
];

const comandos = [
  { t: "Extruir", n: "extruir", w: 33 },
  { t: "Achaflanar", n: "redondo", w: 48 },
  { t: "Guardar como", n: "guardar", w: 57 },
  { t: "Eliminar", n: "x", w: 38 },
  { t: "Editar perfil", n: "editar", w: 48, off: true },
  { t: "Cortar", n: "redondo", w: 34 },
  { t: "Agujero", n: "agujero", w: 38 },
  { t: "Boceto", n: "perfil", w: 35 },
  { t: "Revolución", n: "revol", w: 47 },
  { t: "Redondear", n: "redondo", w: 48, on: true },
];

const arbol = [
  { t: "Pieza1", x: 38, p: 5, e: "abierto", n: ["ele", "pieza"] },
  { t: "Base", x: 49, p: 24, n: ["ojo", "base"] },
  { t: "Material (Ninguno)", x: 49, p: 36, n: ["mat"] },
  { t: "Planos de referencia base", x: 49, p: 14, e: "cerrado", n: ["ojono", "planos"], gris: true },
  { t: "Cuerpos de diseño", x: 49, p: 13, e: "abierto", n: ["ojo", "cuerpo"] },
  { t: "Cuerpo de diseño_1", x: 64, p: 38, n: ["ojo", "cuerpo1"] },
  { t: "Ordenado", x: 25, p: 13, e: "abierto", n: [], ord: true },
  { t: "Protrusión 1", x: 64, p: 29, e: "cerrado", n: ["extruir"] },
  { t: "Protrusión 2", x: 64, p: 29, e: "cerrado", n: ["extruir"] },
  { t: "Protrusión 3", x: 64, p: 29, e: "cerrado", n: ["extruir"] },
];

const secciones = [
  { t: "Parámetros de redon...", n: "param", e: "hueca" },
  { t: "Seleccionar", n: "selcubo", e: "esquina" },
  { t: "Suavizar esquina", n: "suave", e: "hueca", c: "blanca" },
  { t: "Forma", e: "hueca" },
];

const lista = [
  ["nube", "On"], ["equipo", "Es"], ["bibl", "Bi"], ["user", "Jo"], ["red", "Re"],
  ["carpeta", "bl"], ["carpeta", "CO"], ["carpeta", "cu"], ["carpeta", "pe"], ["carpeta", "Pi"],
  ["carpeta", "So"], ["carpeta", "un"], ["atajo", "Ke"], ["atajo", "Ka"],
];
</script>

<style>
body {
  margin: 0;
  background: #000;
}
</style>

<style scoped>
.pantalla {
  width: 1280px;
  height: 720px;
  box-sizing: border-box;
  padding: 90px 160px;
  background: #000;
  overflow: hidden;
  font-family: "Liberation Sans", Arial, sans-serif;
  font-size: 7px;
  line-height: 1;
  color: #333;
  white-space: nowrap;
}
.defs { position: absolute; }
.ventana {
  width: 960px;
  height: 540px;
  display: flex;
  flex-direction: column;
  background: #fff;
  overflow: hidden;
}
.ventana div, .ventana header, .ventana section, .ventana footer, .ventana aside { box-sizing: border-box; }
svg, .ico { flex-shrink: 0; display: block; }
i { font-style: normal; flex-shrink: 0; }

/* Cabecera */
.cabecera {
  height: 34px;
  color: #eaf6f8;
  background: linear-gradient(100deg, #086a80 0%, #0a6d83 55%, #287f94 66%, #4599aa 82%, #5badb9 100%);
}
.titulo { height: 19px; display: flex; align-items: center; }
.logo {
  width: 15px;
  height: 15px;
  margin-left: 4px;
  background: #27409a;
  border: 1px solid #a9bedd;
  font-size: 7px;
  line-height: 15px;
  font-weight: bold;
  text-align: center;
}
.rapido { width: 209px; padding-left: 14px; display: flex; align-items: center; }
.rapido div { display: flex; align-items: center; gap: 3px; flex-shrink: 0; }
.rapido .tri { border-top-color: #dcecef; }
.titulo-texto { margin-left: 174px; width: 300px; font-size: 7.85px; }
.titulo-der { margin-left: 173px; display: flex; align-items: center; }
.titulo-der b { font-size: 5.2px; width: 33px; -webkit-text-stroke: 0.2px #eaf6f8; }
.titulo-der .equis { margin-left: 12px; font-size: 9px; }
.min { width: 6px; height: 2px; background: #e8f5f7; margin-top: 4px; }
.rest { width: 6px; height: 6px; box-sizing: border-box; border: 1px solid #e8f5f7; margin-left: 14px; margin-top: 1px; box-shadow: 1px -1px 0 #b5d9df; }
.min.chico { width: 4px; height: 1px; margin-left: 7px; }
.rest.chico { width: 5px; height: 5px; margin-left: 6px; margin-top: 0; }
.menu { height: 15px; display: flex; align-items: center; font-size: 8px; }
.menu > span { text-align: center; line-height: 17px; height: 15px; }
.menu > span.activo { color: #d6d17c; height: 14px; border-bottom: 1px solid #dce9d0; box-sizing: border-box; margin-top: -1px; }
.buscar-cmd {
  margin-left: 196px;
  width: 82px;
  height: 12px;
  background: #fff;
  color: #222;
  display: flex;
  align-items: center;
  justify-content: space-between;
  padding: 0 2px 0 2px;
  font: 6.4px "Noto Sans", sans-serif;
}
.menu-der { display: flex; align-items: center; margin-left: 28px; font-size: 7px; }
.cara { width: 7px; height: 7px; border-radius: 50%; background: #e3da68; margin-right: 6px; box-shadow: inset 0 0 0 1px #cdbb51; }
.cara.roja { background: #c06436; box-shadow: inset 0 0 0 1px #91502f; }
.menu-der b { margin-left: 1px; }
.menu-der span { margin-left: 5px; }

/* Cinta */
.cinta { height: 53px; display: flex; border-bottom: 1px solid #c4c9ca; background: #fff; flex-shrink: 0; }
.grupo { display: flex; flex-direction: column; position: relative; }
.grupo::after { content: ""; position: absolute; right: 0; top: 4px; width: 1px; height: 44px; background: #dfe2e2; }
.grupo-cuerpo { height: 41px; display: flex; }
.grupo-nombre { text-align: center; color: #3c3c3c; font-size: 6.8px; line-height: 9px; }
.boton { display: flex; flex-direction: column; align-items: center; padding-top: 3px; color: #444; height: 41px; }
.boton span { line-height: 6.5px; font-size: 6.9px; }
.boton > .tri { margin-top: 3px; }
.boton-ico { height: 20px; display: flex; align-items: center; margin-bottom: 4px; }
.boton.marcado { background: #cfe6e8; color: #6a8084; height: 38px; margin-top: 3px; padding-top: 0; }
.boton.apagado { color: #b8b8b8; }
.boton.bajo .boton-ico { height: 17px; margin-bottom: 7px; }
.boton.bajo span { font-size: 6.6px; margin-top: -1px; }
.boton.bajo .tri { margin-top: 5px; }
.boton.sep, .columna.sep { border-left: 1px solid #e0e3e3; }
.columna { padding-top: 3px; }
.columna div { height: 12.3px; display: flex; align-items: center; padding-left: 2px; }
.grupo:nth-child(4) .columna div { padding-left: 5px; }
.columna .tri { margin-left: 3px; }
.columna .marcada { background: #bed8dc; width: 13px; }
.tri { display: inline-block; width: 0; height: 0; border: 1.7px solid transparent; border-top: 2.2px solid #333; border-bottom: 0; vertical-align: middle; }
.tri.medio { border-width: 2.5px; border-top-width: 3px; border-bottom: 0; }
.filas { padding: 4px 0 0 5px; }
.filas div { height: 12px; display: flex; align-items: center; gap: 2px; font-size: 6.75px; }

.comandos { height: 16px; flex-shrink: 0; margin-left: 21px; padding: 1px 0 1px 9px; display: flex; border-bottom: 1px solid #b9bfc0; border-left: 1px solid #ccc; }
.comandos div { display: flex; align-items: center; gap: 1px; font-size: 6.65px; height: 13px; color: #222; }
.comandos .off { color: #bbb; }
.comandos .on { background: #cfe6e8; color: #5f7478; padding-left: 1px; }
.aviso { height: 15px; flex-shrink: 0; display: flex; align-items: center; gap: 7px; padding-left: 3px; border-bottom: 1px solid #c0c5c6; font: 8.25px/11px "Noto Sans", sans-serif; }
.aviso span { margin-top: -2px; }
.aviso i { width: 12px; height: 5px; background: linear-gradient(90deg, #5998ba, #d5e8f2); border: 1px solid #8ba9b8; box-sizing: border-box; }
.pestanas { height: 18px; flex-shrink: 0; display: flex; justify-content: space-between; align-items: flex-end; border-bottom: 1px solid #6f8287; }
.pestana { width: 58px; height: 16px; background: #0a7086; color: #fff; display: flex; align-items: center; margin-left: 1px; padding-left: 10px; gap: 1px; font: 7px "Noto Sans", sans-serif; }
.pestana b { margin-left: 9px; }
.pestanas-der { display: flex; align-items: center; gap: 4px; font-size: 7px; height: 18px; padding-right: 1px; color: #222; }
.pestanas-der span { font-size: 6px; }
.pestanas-der b { font-size: 8px; }

/* Árbol */
.cuerpo { height: 366px; flex-shrink: 0; display: flex; }
.arbol { width: 144px; flex-shrink: 0; padding-left: 4px; border-right: 1px solid #e5eaea; background: #fff; display: flex; flex-direction: column; font: 6.4px/10px "Noto Sans", sans-serif; box-shadow: inset 4px 0 0 #f3f7f7; }
.arbol-tit { height: 14.5px; display: flex; align-items: center; padding-left: 4px; gap: 3px; font-size: 7px; }
.arbol-tit span { width: 97px; }
.arbol-tit b { font-size: 7px; margin-left: 2px; }
.tri.grande { border-width: 3px; border-top-width: 4px; border-bottom: 0; }
.fila { height: 10px; display: flex; align-items: center; }
.fila-pre { display: flex; align-items: center; gap: 3px; height: 10px; flex-shrink: 0; }
.fila-pre .hueco { flex: 1; }
.fila-pre .ico:last-child { margin-right: 4px; }
.fila.gris { color: #999; }
.fila-texto { flex: 1; display: flex; align-items: center; justify-content: space-between; }
.fila.ord .fila-texto { background: #f7d99f; padding: 0 3px 0 2px; height: 9px; line-height: 9px; color: #6c5a30; }
.marca { width: 7px; height: 6px; border: 1px solid #fbefd4; box-sizing: border-box; background: #f3cf8a; }
.exp { width: 0; height: 0; border: 3.5px solid transparent; }
.exp.abierto { border-top: 4.500px solid #555; border-bottom: 0; }
.exp.cerrado { border-left: 4.500px solid #555; border-right: 0; margin-left: 1px; }
.scroll-h { margin-top: auto; margin-bottom: 2px; display: flex; align-items: center; height: 10px; padding: 0 4px 0 5px; gap: 4px; background: #f6f6f6; font-size: 10px; }
.scroll-h i { flex: 1; height: 9px; background: #cfcfcf; }

/* Vista */
.vista { width: 793px; flex-shrink: 0; position: relative; background: #f7fbfa; }
.modelo { width: 793px; height: 366px; }
.radio { font: italic 14.5px "Liberation Sans", sans-serif; fill: #b02355; }
.dialogo { position: absolute; left: 656px; top: 87px; width: 112px; height: 279px; background: #fcfefe; border: 1px solid #7f9fa6; border-bottom: 0; font: 7px "Noto Sans", sans-serif; color: #566; }
.dialogo-tit { height: 11px; background: #35869a; color: #e3f1f4; display: flex; align-items: center; padding: 0 4px 0 2px; gap: 5px; }
.dialogo-tit span { flex: 1; }
.dialogo-tit .ayuda { font-size: 9px; line-height: 11px; font-weight: normal; }
.dialogo-bot { display: flex; justify-content: space-between; padding: 4px 2px 3px; }
.dialogo-bot span { width: 49px; height: 14px; box-sizing: border-box; border: 1px solid #b5b8b8; background: #dedfdf; text-align: center; line-height: 12px; font-size: 6.6px; color: #777; }
.dialogo-bot .foco { border: 1px solid #4b7d9b; background: #e3eff6; color: #444; }
.seccion { margin: 0 3px 4px 4px; height: 15px; background: #d5e9e9; display: flex; align-items: center; gap: 5px; padding-left: 4px; font-size: 6.9px; }
.seccion .ico { margin-right: -4px; margin-left: 1px; }
.seccion.blanca { background: none; margin-top: 8px; }
.exp.hueca { width: 4px; height: 6px; border: 0; background: #799; clip-path: polygon(0 0, 100% 50%, 0 100%, 0 75%, 50% 50%, 0 25%); }
.exp.esquina { border: 0; width: 5px; height: 5px; background: #222; clip-path: polygon(100% 0, 100% 100%, 0 100%); margin-right: -1px; }
.cubo-vista { position: absolute; left: 750px; top: 300px; width: 46px; height: 50px; }
.trasera { font: 8px "Liberation Sans", sans-serif; fill: #333; }
.cursor { position: absolute; left: 743px; top: 110px; width: 13px; height: 13px; }

/* Panel derecho */
.panel { width: 23px; flex-shrink: 0; padding-right: 2px; background: #f8fbfb; font: 7px "Noto Sans", sans-serif; display: flex; flex-direction: column; }
.panel-tit { height: 13px; display: flex; align-items: center; justify-content: space-between; padding: 0 3px 0 1px; }
.panel-lupa { margin-top: 4px; height: 14px; display: flex; justify-content: space-between; }
.panel-lupa i { width: 4px; height: 13px; background: #ddd; border: 1px solid #bbb; box-sizing: border-box; }
.panel-lupa span { width: 14px; height: 13px; box-sizing: border-box; background: #e3e6e8; border: 1px solid #b9bec0; display: flex; align-items: center; justify-content: center; color: #36729c; transform: scaleX(-1); }
.panel-sel { margin-top: 4px; height: 13px; border: 1px solid #a9adaf; background: #dfe3e5; display: flex; align-items: center; padding-left: 2px; gap: 3px; }
.panel-sel i { width: 7px; height: 7px; background: #1987d8; }
.panel-busca { margin: 3px 0 2px; height: 11px; border: 1px solid #a9adaf; background: #fff; display: flex; align-items: center; justify-content: space-between; padding: 0 1px; }
.panel-busca span { color: #bbb; }
.panel-lista { height: 298px; border: 1px solid #8f9799; border-right-color: #c5cbcc; background: #fff; font-size: 6.4px; }
.panel-lista div { height: 10.5px; display: flex; align-items: center; gap: 1px; }
.panel-lista span { letter-spacing: -0.3px; }

/* Estado */
.estado { height: 13px; flex-shrink: 0; background: #08697f; display: flex; align-items: center; padding-left: 708.5px; gap: 5px; color: #e5f1f4; }
.e-lupa { width: 9px; }
.verde { width: 9px; height: 9px; background: #84c343; box-shadow: inset 2px 2px 0 #e4efd8; }
.doble { width: 9px; height: 9px; background: #d4ac43; box-shadow: inset 3px 3px 0 #5d8a97; }
.bolita { width: 8px; height: 8px; border-radius: 50%; background: #dfe5e6; color: #879; text-align: center; font-size: 7px; line-height: 8px; margin-left: -1px; }
.zoom { width: 70px; height: 1px; background: #dcebee; margin: 0 -1px; display: flex; justify-content: center; align-items: center; }
.zoom i { width: 4px; height: 6px; margin-right: 8px; background: #cfdde0; }
.yt { width: 10px; height: 7px; background: #c4122f; color: #fff; font-size: 5px; line-height: 7px; text-align: center; border-radius: 1px; }
.rec { width: 9px; height: 9px; border-radius: 50%; background: #a8202d; border: 2.500px solid #eceff0; box-sizing: border-box; margin-left: 1px; }
.sube { width: 8px; height: 9px; background: #f4f4f4; color: #c2303a; text-align: center; font-size: 7px; line-height: 9px; margin-left: 1px; }

/* Barra de tareas */
.tareas { height: 25px; flex-shrink: 0; display: flex; align-items: center; background: linear-gradient(90deg, #d7ddda, #dcdfe4 50%, #d6dcda 72%, #dfe0e1); font-family: "Noto Sans", sans-serif; color: #222; }
.inicio { width: 10px; height: 10px; margin: 0 11px 0 10px; }
.buscar { width: 178px; height: 24px; background: #fff; display: flex; align-items: center; padding-left: 6px; gap: 7px; font-size: 8.8px; }
.apps { display: flex; margin-left: 2px; width: 280px; }
.apps > div { width: 31px; display: flex; align-items: center; justify-content: center; }
.adobe { width: 14px; height: 14px; border-radius: 2px; background: #06004e; color: #aca8fa; font: bold 8px/14px "Liberation Sans", sans-serif; text-align: center; }
.adobe.foto { background: #061e33; color: #62b8ef; letter-spacing: -0.3px; }
.tarea { width: 95px; height: 25px; margin-left: 3px; display: flex; align-items: center; gap: 3px; padding-left: 4px; font-size: 6.8px; border-bottom: 2px solid #4b94d0; }
.tarea.activa { width: 100px; margin-left: 0; padding-left: 7px; gap: 3px; background: #f3f6f9; font-size: 7.2px; }
.bandeja { display: flex; align-items: center; gap: 6px; margin-left: 135px; width: 60px; }
.reloj { width: 40px; display: flex; flex-direction: column; align-items: center; font-size: 7.200px; line-height: 11px; }
.notif { width: 11px; height: 11px; margin-left: 10px; }
</style>
